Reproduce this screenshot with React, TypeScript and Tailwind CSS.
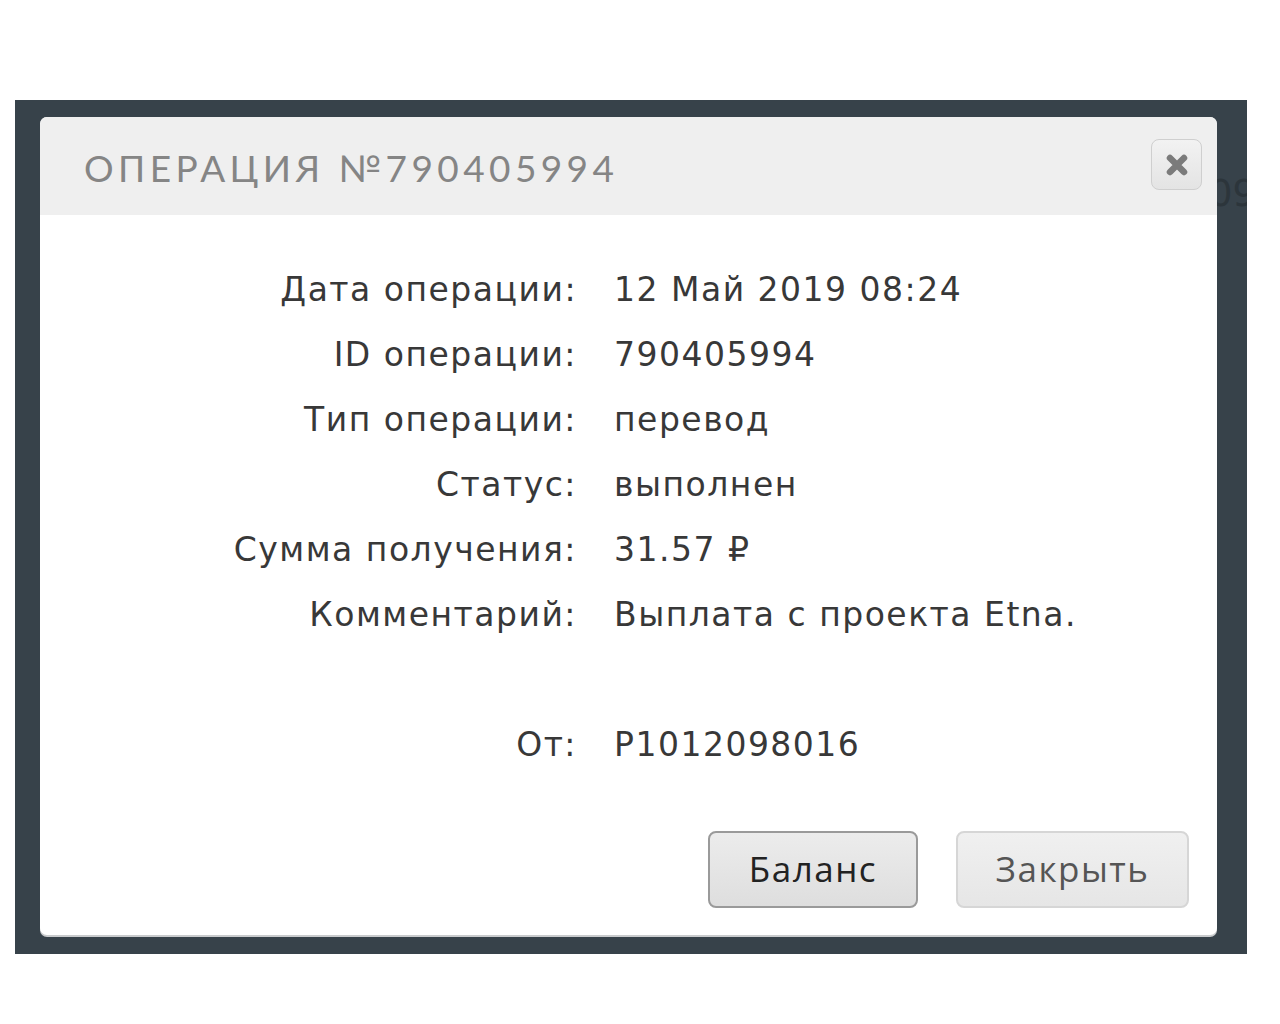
import React from "react";

const rows: [string, string][] = [
  ["Дата операции:", "12 Май 2019 08:24"],
  ["ID операции:", "790405994"],
  ["Тип операции:", "перевод"],
  ["Статус:", "выполнен"],
  ["Сумма получения:", "31.57 ₽"],
  ["Комментарий:", "Выплата с проекта Etna."],
  ["", ""],
  ["От:", "P1012098016"],
];

export default function App() {
  return (
    <div className="w-[1280px] h-[1024px] bg-white pt-[100px] pl-[15px]">
      <div className="relative w-[1232px] h-[854px] bg-[#37424a] pt-[17px] pl-[25px] pr-[30px] pb-[19px] overflow-hidden">
        <div
          className="absolute left-[1194px] top-[75px] text-[37px] leading-none text-[#2c353b]"
          style={{ fontFamily: "'DejaVu Sans', sans-serif" }}
        >
          09
        </div>
        <div className="relative flex flex-col w-[1177px] h-[818px] bg-white rounded-[7px] shadow-[0_2px_0_#c9cbcd] overflow-hidden">
          <div className="flex items-center justify-between h-[98px] bg-[#efefef] pl-[44px] pr-[15px]">
            <div
              className="text-[37px] tracking-[4.4px] text-[#858585] pt-[4px]"
              style={{ fontFamily: "Lato, 'Noto Sans', sans-serif" }}
            >
              ОПЕРАЦИЯ №790405994
            </div>
            <div className="flex items-center justify-center w-[51px] h-[51px] rounded-[8px] border border-[#cfcfcf] bg-gradient-to-b from-[#f2f2f2] to-[#e4e4e4] -mt-[3px]">
              <svg width="26" height="26" viewBox="0 0 26 26">
                <path d="M6 6 L20 20 M20 6 L6 20" stroke="#7b7b7b" strokeWidth="6.5" strokeLinecap="round" />
              </svg>
            </div>
          </div>
          <div
            className="grid grid-cols-[537px_1fr] gap-x-[37px] pt-[42px] text-[#383838]"
            style={{ fontFamily: "'DejaVu Sans', 'Noto Sans', sans-serif" }}
          >
            {rows.map(([l, v], i) => (
              <React.Fragment key={i}>
                <div className="text-right text-[33px] leading-[65px] h-[65px] tracking-[1.5px]">{l}</div>
                <div className="text-[33px] leading-[65px] h-[65px] tracking-[1.5px]">{v}</div>
              </React.Fragment>
            ))}
          </div>
          <div
            className="flex justify-end gap-[38px] pr-[28px] mt-[54px]"
            style={{ fontFamily: "'Open Sans', 'Noto Sans', sans-serif" }}
          >
            <div className="flex items-center justify-center w-[210px] h-[77px] rounded-[8px] border-2 border-[#9a9a9a] bg-gradient-to-b from-[#ececec] to-[#dedede] text-[35px] tracking-[1.5px] text-[#222]">
              Баланс
            </div>
            <div className="flex items-center justify-center w-[233px] h-[77px] rounded-[8px] border-2 border-[#d6d6d6] bg-gradient-to-b from-[#f0f0f0] to-[#e6e6e6] text-[35px] tracking-[1.5px] text-[#555]">
              Закрыть
            </div>
          </div>
        </div>
      </div>
    </div>
  );
}
